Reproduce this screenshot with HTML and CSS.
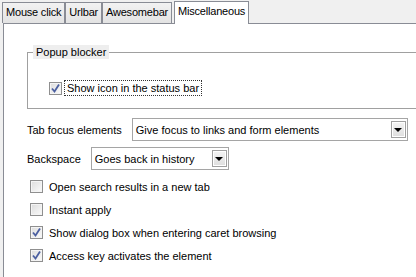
FILE: index.html
```html
<!DOCTYPE html>
<html lang="en">
<head>
    <meta charset="UTF-8" />
    <title>Miscellaneous</title>
    <link rel="stylesheet" href="styles.css">
</head>
<body>

<div class="tabs">
    <div class="tab">Mouse click</div>
    <div class="tab">Urlbar</div>
    <div class="tab">Awesomebar</div>
    <div class="tab selected">Miscellaneous</div>
</div>

<div class="panel">
    <fieldset class="group">
        <legend>Popup blocker</legend>
        <div class="check-row">
            <span class="box checked">
                <svg width="11" height="11" viewBox="0 0 11 11"><path d="M2 5.5 L4.5 8.5 L9 1.5" fill="none" stroke="#4b5fa0" stroke-width="1.8"/></svg>
            </span>
            <span class="focus-label">Show icon in the status bar</span>
        </div>
    </fieldset>

    <div class="field-row first">
        <span class="field-label">Tab focus elements</span>
        <div class="select wide">
            <span class="select-text">Give focus to links and form elements</span>
            <span class="drop"><span class="arrow"></span></span>
        </div>
    </div>

    <div class="field-row">
        <span class="field-label">Backspace</span>
        <div class="select narrow">
            <span class="select-text">Goes back in history</span>
            <span class="drop"><span class="arrow"></span></span>
        </div>
    </div>

    <div class="options">
        <div class="check-row">
            <span class="box"></span>
            <span>Open search results in a new tab</span>
        </div>
        <div class="check-row">
            <span class="box"></span>
            <span>Instant apply</span>
        </div>
        <div class="check-row">
            <span class="box checked">
                <svg width="11" height="11" viewBox="0 0 11 11"><path d="M2 5.5 L4.5 8.5 L9 1.5" fill="none" stroke="#4b5fa0" stroke-width="1.8"/></svg>
            </span>
            <span>Show dialog box when entering caret browsing</span>
        </div>
        <div class="check-row">
            <span class="box checked">
                <svg width="11" height="11" viewBox="0 0 11 11"><path d="M2 5.5 L4.5 8.5 L9 1.5" fill="none" stroke="#4b5fa0" stroke-width="1.8"/></svg>
            </span>
            <span>Access key activates the element</span>
        </div>
    </div>
</div>

</body>
</html>
```

FILE: styles.css
```css
html, body {
    height: 100%;
}
body {
    margin: 0;
    background-color: #f0f0f0;
    font-family: "Liberation Sans", Arial, sans-serif;
    font-size: 11px;
    color: #000;
    display: flex;
    flex-direction: column;
    overflow: hidden;
}
.tabs {
    display: flex;
    align-items: flex-end;
    padding: 2px 0 0 2px;
    height: 21px;
    box-sizing: content-box;
}
.tab {
    height: 20px;
    line-height: 19px;
    padding: 0 3px;
    border: 1px solid #898c95;
    border-bottom: 0;
    background: linear-gradient(#f2f2f2, #e3e3e3);
    font-size: 11px;
    letter-spacing: -0.2px;
}
.tab.selected {
    position: relative;
    height: 22px;
    line-height: 19px;
    margin: 0 0 -1px 2px;
    padding: 0 3px;
    background: #fff;
}
.panel {
    flex: 1;
    background: #fff;
    border-top: 1px solid #898c95;
    border-left: 1px solid #898c95;
    margin-left: 3px;
    padding-left: 23px;
    overflow: hidden;
}
.group {
    margin: 21px -20px 0 0;
    padding: 20px 0 11px 21px;
    border: 1px solid #a0a0a0;
    border-right: 0;
}
.group legend {
    margin-left: -16px;
    padding: 0 3px;
    line-height: 14px;
    background: #eeeeee;
}
.check-row {
    display: flex;
    align-items: center;
    height: 23px;
}
.group .check-row {
    height: 18px;
}
.box {
    width: 11px;
    height: 11px;
    border: 1px solid #8f8f8f;
    background: linear-gradient(135deg, #dcdcdc, #fbfbfb);
    box-shadow: inset 0 0 0 1px #f4f4f4;
    margin-right: 6px;
    display: flex;
}
.options .box {
    margin-left: 3px;
}
.focus-label {
    border: 1px dotted #333;
    padding: 1px 2px 1px 2px;
    margin-left: -4px;
}
.field-row {
    display: flex;
    align-items: center;
    gap: 10px;
    margin-top: 6px;
}
.field-row.first {
    margin-top: 9px;
}
.select {
    display: flex;
    align-items: center;
    height: 21px;
    border: 1px solid #a5a5a5;
    padding: 0 1px 0 3px;
}
.select.wide {
    width: 270px;
}
.select.narrow {
    width: 132px;
}
.select-text {
    flex: 1;
}
.drop {
    width: 13px;
    height: 15px;
    border: 1px solid #a0a0a0;
    box-shadow: inset 0 0 0 1px #fff;
    background: linear-gradient(#f4f4f4, #dedede);
    display: flex;
    align-items: center;
    justify-content: center;
}
.arrow {
    width: 0;
    height: 0;
    border-left: 4px solid transparent;
    border-right: 4px solid transparent;
    border-top: 4px solid #000;
}
.options {
    margin-top: 5px;
}
```
